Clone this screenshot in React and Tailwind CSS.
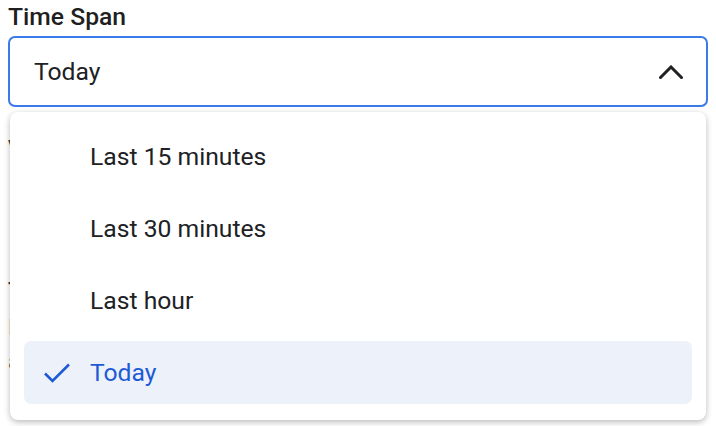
import { useState } from "react";

const options = ["Last 15 minutes", "Last 30 minutes", "Last hour", "Today"];

function ChevronUp() {
  return (
    <svg width="24" height="14" viewBox="0 0 24 14" fill="none">
      <path d="M1.5 12.5 L12 2 L22.5 12.5" stroke="#202124" strokeWidth="3" strokeLinecap="square" />
    </svg>
  );
}

function Check() {
  return (
    <svg width="28" height="22" viewBox="0 0 28 22" fill="none">
      <path d="M2 11.5 L9.5 19 L26 2.5" stroke="#1d5bd6" strokeWidth="2.6" />
    </svg>
  );
}

function App() {
  const [selected] = useState("Today");

  return (
    <div className="relative w-[716px] h-[426px] overflow-hidden bg-white font-['Roboto',sans-serif] text-[#202124]">
      {/* page behind the open menu */}
      <div className="flex flex-col">
        <div className="pl-[8px] pt-[3px] text-[24.7px] leading-[28px] font-medium text-[#1f1f1f]">Time Span</div>
        <div className="mx-[8px] mt-[5px] h-[71px] border-2 border-[#3b7be9] rounded-[7px] flex items-center justify-between pl-[24px] pr-[23px]">
          <span className="text-[24.7px] leading-[28px]">{selected}</span>
          <ChevronUp />
        </div>
        <div className="pl-[8px] pt-[28px] text-[24px] leading-[28px] font-medium text-[#333]">Visualization</div>
        <div className="pl-[8px] pt-[114px] text-[24px] leading-[28px] font-medium text-[#333]">Tooltip</div>
        <div className="pl-[8px] pt-[6px] text-[22px] leading-[34px] text-[#555]">Include additional</div>
        <div className="pl-[8px] text-[22px] leading-[34px] text-[#555]">attributes</div>
        <div className="mt-[10px] ml-[40px] flex items-center gap-[20px] text-[#999] text-[20px]">
          <div className="w-[36px] h-[30px] border border-[#ccc] rounded" />
          <span>✕</span>
          <span className="ml-[40px]">Select</span>
          <span>✕</span>
          <div className="w-[30px] h-[30px] border border-[#ccc]" />
        </div>
      </div>

      {/* open dropdown menu */}
      <div className="absolute left-[10px] top-[112px] w-[696px] h-[308px] bg-white rounded-[8px] shadow-[0_2px_6px_rgba(0,0,0,0.28)] flex flex-col gap-[9px] pt-[13px] px-[14px]">
        {options.map((opt) => {
          const active = opt === selected;
          return (
            <div
              key={opt}
              className={
                active
                  ? "h-[63px] flex items-center rounded-[7px] bg-[#edf2fa] text-[#1d5bd6]"
                  : "h-[63px] flex items-center rounded-[7px] text-[#202124]"
              }
            >
              <div className="w-[66px] pl-[19px] flex items-center">{active && <Check />}</div>
              <span className="text-[24.7px] leading-[28px]">{opt}</span>
            </div>
          );
        })}
      </div>
    </div>
  );
}

export default App;
